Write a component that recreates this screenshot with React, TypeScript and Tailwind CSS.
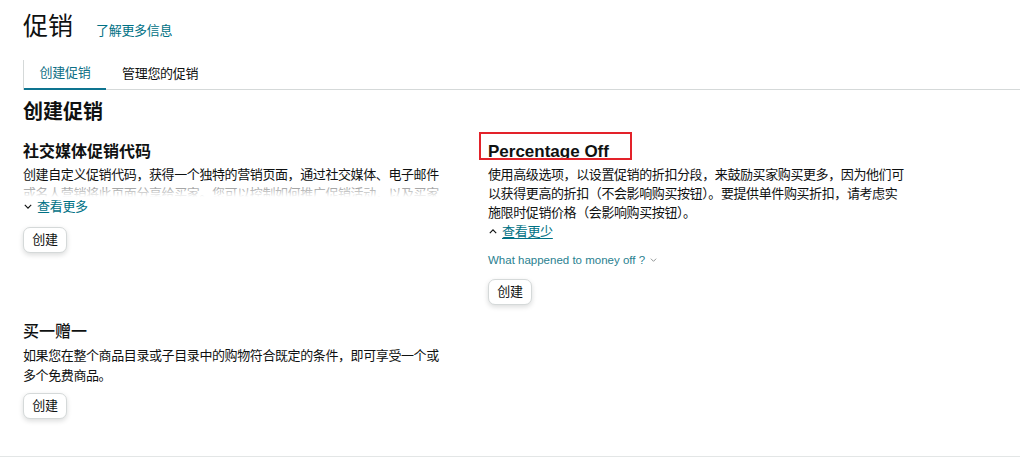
import React from "react";

const font = { fontFamily: '"Liberation Sans", "Noto Sans CJK SC", sans-serif' };

function ChevronDown({ className = "" }: { className?: string }) {
  return (
    <svg viewBox="0 0 10 6" className={className} fill="none" stroke="currentColor" strokeWidth="1.4">
      <path d="M1 1l4 4 4-4" />
    </svg>
  );
}

function ChevronUp({ className = "" }: { className?: string }) {
  return (
    <svg viewBox="0 0 10 6" className={className} fill="none" stroke="currentColor" strokeWidth="1.4">
      <path d="M1 5l4-4 4 4" />
    </svg>
  );
}

function CreateButton() {
  return (
    <button className="h-[26px] w-[44px] rounded-[7px] border border-[#d5d9d9] bg-white text-[13px] tracking-[-0.3px] text-[#0f1111] shadow-[0_2px_5px_rgba(15,17,17,0.15)]">
      创建
    </button>
  );
}

export default function App() {
  return (
    <div className="min-h-[462px] bg-white text-[#0f1111]" style={font}>
      <div className="pl-[23px]">
        {/* page title */}
        <div className="flex items-baseline pt-[11px]">
          <h1 className="text-[25px] font-normal leading-[30px]">促销</h1>
          <a className="ml-[23px] text-[13px] tracking-[-0.3px] text-[#007185]">了解更多信息</a>
        </div>

        {/* tabs */}
        <div className="mt-[19px] flex h-[30px] border-b border-l border-[#d5d9d9] text-[13px] tracking-[-0.3px]">
          <div className="-mb-px flex w-[82px] items-center justify-center border-b-2 border-[#0e7490] pb-[2px] text-[#0e6f86]">
            创建促销
          </div>
          <div className="flex items-center px-[16px] pb-[2px] text-[#0f1111]">
            管理您的促销
          </div>
        </div>

        <h2 className="mt-[10px] text-[20px] font-bold leading-[24px]">创建促销</h2>

        <div className="mt-[18px] grid grid-cols-[420px_420px] gap-x-[45px] gap-y-[17px]">
          {/* social media promo code */}
          <div>
            <h3 className="text-[16px] font-bold leading-[20px]">社交媒体促销代码</h3>
            <div className="relative mt-[3px] h-[32px] overflow-hidden text-[13px] leading-[19px] tracking-[-0.4px]">
              <p>
                创建自定义促销代码，获得一个独特的营销页面，通过社交媒体、电子邮件或名人营销将此页面分享给买家。您可以控制如何推广促销活动，以及买家可以享受的折扣。
              </p>
              <div className="absolute inset-x-0 bottom-0 h-[16px] bg-gradient-to-b from-white/30 to-white" />
            </div>
            <div className="flex items-center text-[13px] leading-[19px] tracking-[-0.3px]">
              <ChevronDown className="ml-[1px] mr-[5px] h-[5px] w-[8px] text-[#0f1111]" />
              <a className="text-[#007185]">查看更多</a>
            </div>
            <div className="mt-[11px]">
              <CreateButton />
            </div>
          </div>

          {/* percentage off */}
          <div>
            <div className="relative">
              <h3 className="text-[17px] font-bold leading-[20px]">Percentage Off</h3>
              <div className="pointer-events-none absolute left-[-9px] top-[-10px] h-[28px] w-[153px] border-2 border-[#e3222a]" />
            </div>
            <p className="mt-[3px] text-[13px] leading-[19px] tracking-[-0.4px]">
              使用高级选项，以设置促销的折扣分段，来鼓励买家购买更多，因为他们可以获得更高的折扣（不会影响购买按钮）。要提供单件购买折扣，请考虑实施限时促销价格（会影响购买按钮）。
            </p>
            <div className="flex items-center text-[13px] leading-[19px] tracking-[-0.3px]">
              <ChevronUp className="ml-[1px] mr-[5px] h-[5px] w-[8px] text-[#0f1111]" />
              <a className="text-[#007185] underline underline-offset-2">查看更少</a>
            </div>
            <div className="mt-[11px] flex items-center text-[11.5px] leading-[16px] text-[#2a7f90]">
              What happened to money off ?
              <ChevronDown className="ml-[5px] h-[4px] w-[7px] text-[#8a8f8f]" />
            </div>
            <div className="mt-[11px]">
              <CreateButton />
            </div>
          </div>

          {/* buy one get one */}
          <div>
            <h3 className="text-[16px] font-medium leading-[20px]">买一赠一</h3>
            <p className="mt-[4px] text-[13px] leading-[20px] tracking-[-0.4px]">
              如果您在整个商品目录或子目录中的购物符合既定的条件，即可享受一个或多个免费商品。
            </p>
            <div className="mt-[7px]">
              <CreateButton />
            </div>
          </div>
        </div>
      </div>
      <div className="mt-[37px] border-b border-[#e3e6e6]" />
    </div>
  );
}
